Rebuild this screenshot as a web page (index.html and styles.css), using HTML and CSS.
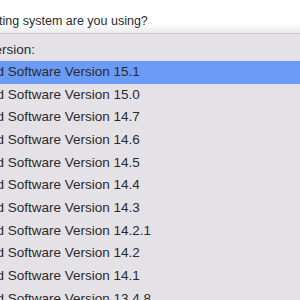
FILE: index.html
```html
<!DOCTYPE html>
<html lang="en">
<head>
    <meta charset="UTF-8">
    <title>Software Version</title>
    <link rel="stylesheet" href="styles.css">
</head>
<body>
    <div class="question">
        <span class="qtext">What operating system are you using?</span>
    </div>
    <div class="panel">
        <div class="label">Select Software Version:</div>
        <ul class="list">
            <li class="item selected">iPad Software Version 15.1</li>
            <li class="item">iPad Software Version 15.0</li>
            <li class="item">iPad Software Version 14.7</li>
            <li class="item">iPad Software Version 14.6</li>
            <li class="item">iPad Software Version 14.5</li>
            <li class="item">iPad Software Version 14.4</li>
            <li class="item">iPad Software Version 14.3</li>
            <li class="item">iPad Software Version 14.2.1</li>
            <li class="item">iPad Software Version 14.2</li>
            <li class="item">iPad Software Version 14.1</li>
            <li class="item">iPad Software Version 13.4.8</li>
        </ul>
    </div>
</body>
</html>
```

FILE: styles.css
```css
body {
    margin: 0;
    padding: 0;
    overflow: hidden;
    font-family: "Liberation Sans", Arial, sans-serif;
    font-size: 13.5px;
    color: #2b2a2c;
    background-color: #e4e2e6;
}

.question {
    height: 33px;
    background: linear-gradient(#ffffff 0px, #ffffff 24px, #ebe9ec 33px);
    border-bottom: 1px solid #c9c7cb;
    white-space: nowrap;
    overflow: hidden;
}

.qtext {
    display: block;
    margin-left: -65.5px;
    padding-top: 12px;
    font-size: 12.5px;
    line-height: 18px;
}

.panel {
    background-color: #e4e2e6;
    white-space: nowrap;
    overflow: hidden;
}

.label {
    margin-left: -112px;
    padding-top: 6px;
    height: 21px;
    line-height: 20px;
}

.list {
    list-style: none;
    margin: 0;
    padding: 0;
}

.item {
    text-indent: -23px;
    height: 22.67px;
    line-height: 22px;
}

.selected {
    background-color: #6a9cf7;
}
```
